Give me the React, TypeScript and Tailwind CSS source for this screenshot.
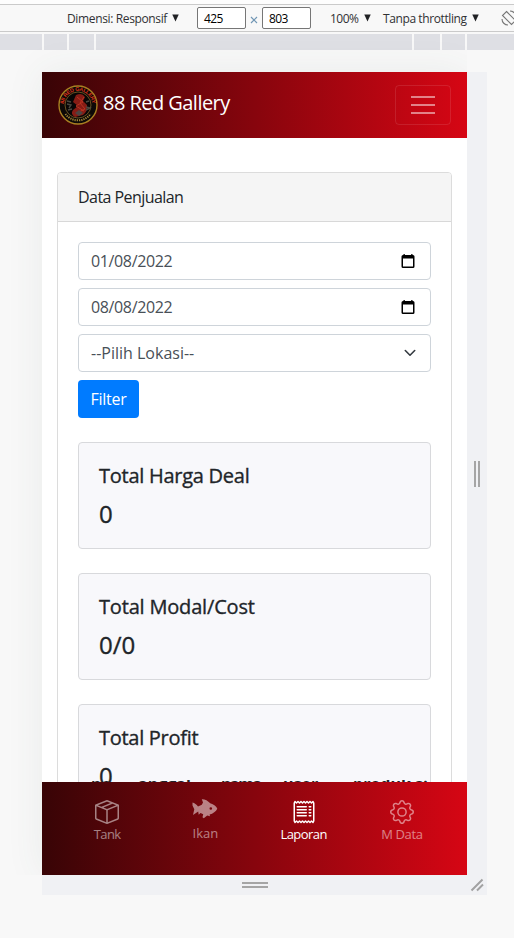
import type { ReactNode } from "react";
import { BsBoxSeam, BsGear, BsReceipt } from "react-icons/bs";

const GRADIENT = "bg-[linear-gradient(90deg,#380406,#d60614)]";

function Caret() {
  return (
    <svg className="shrink-0" width="7" height="8" viewBox="0 0 8 8" preserveAspectRatio="none" fill="#202124">
      <path d="M0.300 0.500h7.400L4 7.500z" />
    </svg>
  );
}

function DevToolbar() {
  return (
    <div className="h-[32px] shrink-0 bg-[#fdfdfd] pt-1">
      <div className="h-[28px] border-t border-b border-[#cacaca] flex items-center bg-[#f8f8f8] text-[12px] text-[#303134] pl-[67px] overflow-hidden whitespace-nowrap">
        <span className="shrink-0 w-[105px] pt-px tracking-[-0.36px]">Dimensi: Responsif</span>
        <Caret />
        <span className="shrink-0 ml-[18px] w-[49px] h-[22px] rounded-[2px] border border-[#767676] bg-white text-black pl-[6px] leading-[22px] tracking-[-0.6px]">425</span>
        <svg className="ml-1 mt-1 shrink-0" width="8" height="8" viewBox="0 0 8 8" stroke="#7197b5" strokeWidth="1.2">
          <path d="M1 1l6 6M7 1L1 7" />
        </svg>
        <span className="shrink-0 ml-1 w-[49px] h-[22px] rounded-[2px] border border-[#767676] bg-white text-black pl-[6px] leading-[22px] tracking-[-0.6px]">803</span>
        <span className="shrink-0 ml-[19px] w-[34px] pt-px tracking-[-0.5px]">100%</span>
        <Caret />
        <span className="shrink-0 ml-[12px] w-[89px] pt-px tracking-[-0.4px]">Tanpa throttling</span>
        <Caret />
        <svg className="ml-[22px] shrink-0" width="16" height="16" viewBox="0 0 16 16" fill="none" stroke="#777" strokeWidth="1.1">
          <path d="M5.500 1.500l9 9-4 4-9-9z" />
          <path d="M1 9a6 6 0 0 0 6 6M15 7a6 6 0 0 0-6-6" />
        </svg>
      </div>
    </div>
  );
}

function Ruler() {
  return (
    <div className="mt-[2px] h-[16px] flex gap-[2px]">
      <div className="w-[42px] bg-[#dedfe4]" />
      <div className="w-[23px] bg-[#dedfe4]" />
      <div className="w-[25px] bg-[#dedfe4]" />
      <div className="w-[316px] bg-[#dedfe4]" />
      <div className="w-[26px] bg-[#dedfe4]" />
      <div className="w-[23px] bg-[#dedfe4]" />
      <div className="flex-1 bg-[#dedfe4]" />
    </div>
  );
}

function Logo() {
  return (
    <svg width="40" height="40" viewBox="0 0 40 40">
      <defs>
        <path id="arcTop" d="M5.800 20a14.200 14.200 0 0 1 28.400 0" />
      </defs>
      <circle cx="20" cy="20" r="19" fill="#0d0907" stroke="#a98022" strokeWidth="1.400" />
      <circle cx="20" cy="20" r="13" fill="#080606" stroke="#80652a" strokeWidth="0.800" />
      <text fontSize="5.500" fontWeight="bold" fill="#d8301a" textAnchor="middle" fontFamily="Liberation Sans, sans-serif" textLength="42">
        <textPath href="#arcTop" startOffset="50%">88 RED GALLERY</textPath>
      </text>
      <path d="M18 10q6-3 9 2l-2 4 4 4q1 6-4 10l-8 2q-5-3-2-7l5-4-5-4z" fill="#861c15" />
      <path d="M19 12l6 5-7 4 8 5M26 12l-4 6 5 6-8 4" fill="none" stroke="#b93322" strokeWidth="1" />
      <path d="M9 19l4 1-2 3M28 22l4 1-4 2M9 16l4 1M28 17l3-1M10 25l4-1" fill="none" stroke="#4a4840" strokeWidth="1.400" />
      <path d="M17 28l4-3 4 3-4 3z" fill="#4c4442" />
      <path d="M7.500 29a15.500 15.500 0 0 0 25 0" fill="none" stroke="#a38637" strokeWidth="2" strokeDasharray="1.200 1" />
    </svg>
  );
}

function FishIcon() {
  return (
    <svg width="26" height="22" viewBox="0 0 26 22" fill="currentColor">
      <path
        fillRule="evenodd"
        d="M.500 4.500C2.500 5 4.500 6.500 6 8.500L9.800 6.800 11 4.500 9.800 1.200C12 .8 16 2.500 18.200 5.200 21.800 6 24.500 8.600 25.300 10.700 24 13.500 21 15.600 17.600 16.500L18 18.300 15.200 17.400 11.800 20.200 10.500 19.300 11.200 16.200 8.500 14.900 6.700 16.800 6.200 13.600 1 17 2.300 11.300 .5 7.500zM18.800 9.200a1.300 1.300 0 1 0 0 2.600 1.300 1.300 0 0 0 0-2.600z"
      />
    </svg>
  );
}

function CalendarIcon() {
  return (
    <svg width="14" height="15" viewBox="0 0 14 15" fill="#000">
      <path fillRule="evenodd" d="M2.500 0h1.300v1h6.400V0h1.300v1h.5q1.500 0 1.500 1.500v10q0 1.500-1.500 1.500H2q-1.500 0-1.500-1.500v-10Q.5 1 2 1h.5zM2 4.500V12.500h10v-8z" />
    </svg>
  );
}

function Field({ text, children }: { text: ReactNode; children: ReactNode }) {
  return (
    <div className="h-[38px] border border-[#ced4da] rounded-[4px] bg-white flex items-center justify-between pl-3 text-[16px] text-[#495057]">
      {text}
      {children}
    </div>
  );
}

function Total({ label, value }: { label: ReactNode; value: string }) {
  return (
    <div className="h-[107px] shrink-0 border border-[#d8d9dc] rounded-[4px] bg-[#f8f8fb] px-5 pt-[21px] text-[#212529] [-webkit-text-stroke:0.35px_#212529]">
      <div className="h-[24px] text-[20px] leading-[24px] whitespace-nowrap">{label}</div>
      <div className="mt-[11px] text-[24px] leading-[29px]">{value}</div>
    </div>
  );
}

function NavItem({ icon, label, active, className }: { icon: ReactNode; label: ReactNode; active?: boolean; className?: string }) {
  return (
    <div className={`flex-1 flex flex-col items-center text-[13px] leading-[20px] ${active ? "text-white" : "text-white/50"} ${className ?? "pt-[18px]"}`}>
      {icon}
      {label}
    </div>
  );
}

export default function App() {
  return (
    <div className="w-[514px] h-[938px] overflow-hidden bg-[#f8f8f8] flex flex-col font-['Open_Sans','Noto_Sans',sans-serif]">
      <DevToolbar />
      <Ruler />
      <div className="mt-[22px] ml-[42px] w-[445px] h-[823px] bg-[#f0f1f4] grid grid-cols-[425px_20px] grid-rows-[803px_20px]">
        <main className="bg-white flex flex-col overflow-hidden shadow-[0_0_36px_rgba(60,90,80,0.08)] [clip-path:inset(-40px_0_0_-40px)]">
          <header className={`h-[66px] shrink-0 flex items-center px-4 text-white ${GRADIENT}`}>
            <Logo />
            <span className="ml-[5px] -mt-[5px] text-[20px] tracking-[-0.54px]">88 Red Gallery</span>
            <span className="ml-auto w-[56px] h-[40px] rounded-[4px] border border-white/10 flex flex-col items-center justify-center gap-[6px]">
              <i className="w-6 h-[2px] bg-white/50" />
              <i className="w-6 h-[2px] bg-white/50" />
              <i className="w-6 h-[2px] bg-white/50" />
            </span>
          </header>
          <div className="relative h-[644px] shrink-0 px-[15px] pt-[34px] overflow-hidden">
            <section className="h-[640px] border border-[#dcdcdc] rounded-[4px] overflow-hidden">
              <div className="h-[49px] border-b border-[#d8d8d8] bg-[#f5f5f5] flex items-center px-5 text-[16px] text-[#212529]">
                <span className="tracking-[-0.56px]">Data Penjualan</span>
              </div>
              <div className="px-5 pt-5 flex flex-col gap-2">
                <Field text={<span className="tracking-[-0.36px]">01/08/2022</span>}>
                  <span className="mr-[15px]"><CalendarIcon /></span>
                </Field>
                <Field text={<span className="tracking-[-0.36px]">08/08/2022</span>}>
                  <span className="mr-[15px]"><CalendarIcon /></span>
                </Field>
                <Field text="--Pilih Lokasi--">
                  <svg className="mr-[14px]" width="12" height="8" viewBox="0 0 12 8" fill="none" stroke="#343a40" strokeWidth="1.600" strokeLinecap="round" strokeLinejoin="round">
                    <path d="M1.300 1.500L6 6.200l4.700-4.700" />
                  </svg>
                </Field>
                <button className="w-[61px] h-[38px] rounded-[4px] bg-[#007bff] text-white text-[16px] tracking-[-0.3px]">Filter</button>
              </div>
              <div className="px-5 pt-6 flex flex-col gap-6">
                <Total label={<span className="tracking-[-0.26px]">Total Harga Deal</span>} value="0" />
                <Total label={<span className="tracking-[-0.18px]">Total Modal/Cost</span>} value="0/0" />
                <Total label={<span className="tracking-[-0.28px]">Total Profit</span>} value="0" />
              </div>
            </section>
            {/* Top edge of the table heading row, hidden by the bottom navigation */}
            <div className="absolute left-[49px] top-[642px] h-[2px] w-[342px] overflow-hidden text-[16px] font-bold leading-[16px] text-[#212529]">
              <div className="-mt-[4px] flex whitespace-nowrap">
                <span className="w-[47px]">no</span>
                <span className="w-[83px]">anggal</span>
                <span className="w-[62px] tracking-[-1.5px]">nama</span>
                <span className="w-[70px]">user</span>
                <span>produk si</span>
              </div>
            </div>
          </div>
          <nav className={`h-[93px] shrink-0 flex px-4 ${GRADIENT}`}>
            <NavItem icon={<BsBoxSeam size={24} />} label={<span className="tracking-[-0.6px]">Tank</span>} />
            <NavItem icon={<FishIcon />} label={<span className="mt-[3px]">Ikan</span>} className="pt-4" />
            <NavItem icon={<BsReceipt size={24} />} label={<span className="tracking-[-0.55px]">Laporan</span>} active />
            <NavItem icon={<BsGear size={24} />} label={<span className="tracking-[-0.35px]">M Data</span>} />
          </nav>
        </main>
        <div className="flex items-center justify-center gap-[2px]">
          <i className="w-[2px] h-[26px] bg-[#a5a5a5]" />
          <i className="w-[2px] h-[26px] bg-[#a5a5a5]" />
        </div>
        <div className="flex flex-col items-center justify-center gap-[2px]">
          <i className="w-[26px] h-[2px] bg-[#a5a5a5]" />
          <i className="w-[26px] h-[2px] bg-[#a5a5a5]" />
        </div>
        <svg width="20" height="20" viewBox="0 0 20 20" stroke="#a2a2a2" strokeWidth="2">
          <path d="M4.500 15.500l11-11M10 15.500l6-6" />
        </svg>
      </div>
    </div>
  );
}
